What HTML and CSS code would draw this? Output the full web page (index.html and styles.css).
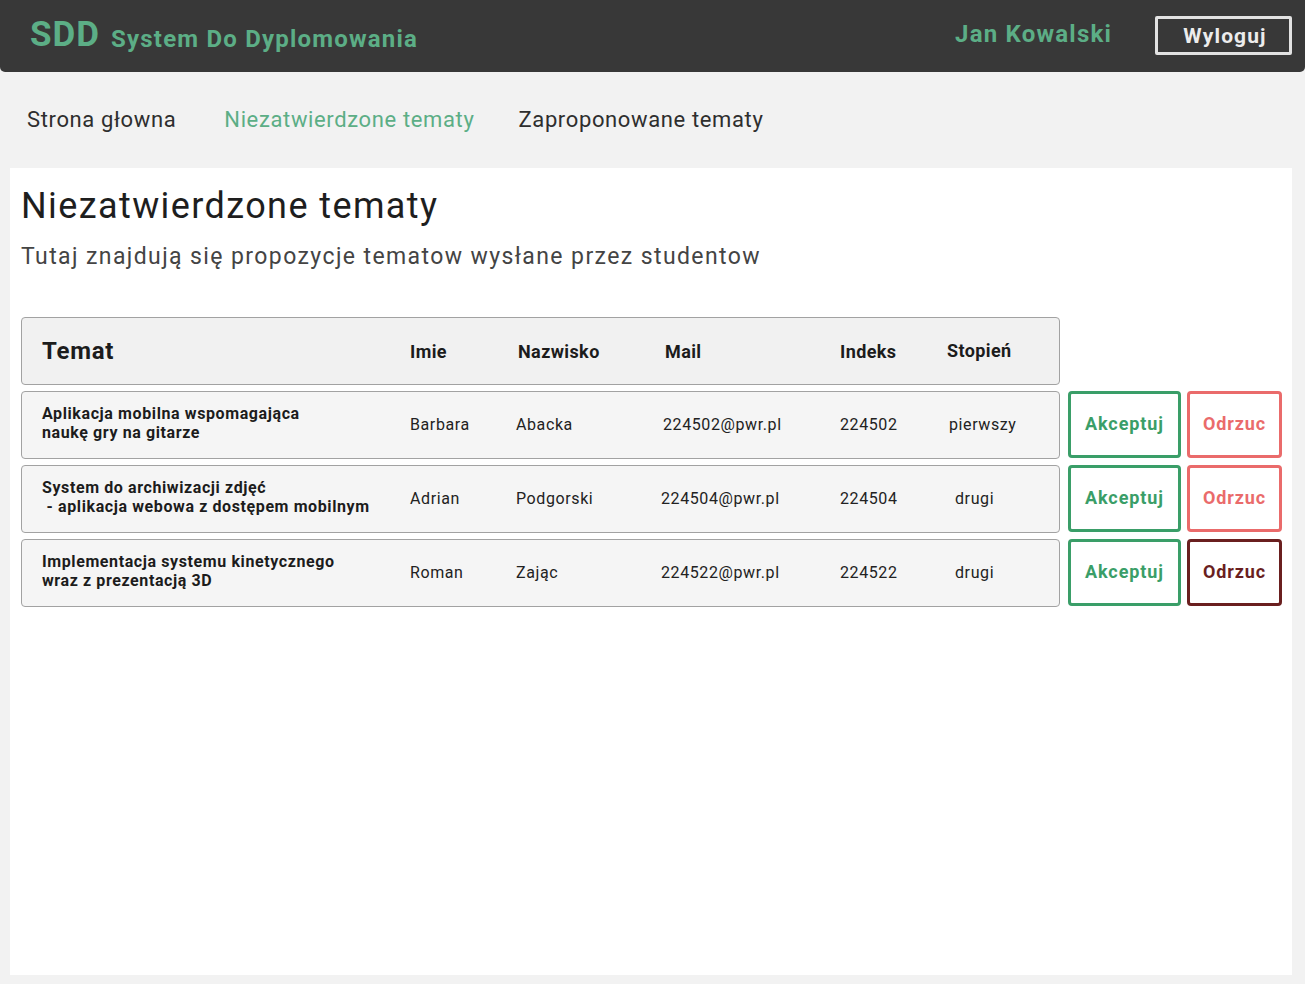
FILE: index.html
```html
<!DOCTYPE html>
<html lang="pl">
<head>
<meta charset="utf-8">
<title>SDD</title>
<link rel="stylesheet" href="styles.css">
</head>
<body>
<header class="topbar">
  <div class="brand"><span class="brand-short">SDD</span><span class="brand-long">System Do Dyplomowania</span></div>
  <div class="user">
    <span class="user-name">Jan Kowalski</span>
    <button class="logout">Wyloguj</button>
  </div>
</header>
<nav class="nav">
  <a class="nav-link first">Strona głowna</a>
  <a class="nav-link active">Niezatwierdzone tematy</a>
  <a class="nav-link">Zaproponowane tematy</a>
</nav>
<main class="panel">
  <h1 class="title">Niezatwierdzone tematy</h1>
  <p class="subtitle">Tutaj znajdują się propozycje tematow wysłane przez studentow</p>
  <div class="table">
    <div class="line">
      <div class="row head">
        <div class="c-temat">Temat</div>
        <div class="c-imie">Imie</div>
        <div class="c-nazw">Nazwisko</div>
        <div class="c-mail">Mail</div>
        <div class="c-idx">Indeks</div>
        <div class="c-st st-head">Stopień</div>
      </div>
    </div>
    <div class="line">
      <div class="row">
        <div class="c-temat topic">Aplikacja mobilna wspomagająca<br>naukę gry na gitarze</div>
        <div class="c-imie">Barbara</div>
        <div class="c-nazw">Abacka</div>
        <div class="c-mail">224502@pwr.pl</div>
        <div class="c-idx">224502</div>
        <div class="c-st">pierwszy</div>
      </div>
      <button class="btn accept">Akceptuj</button>
      <button class="btn reject">Odrzuc</button>
    </div>
    <div class="line">
      <div class="row">
        <div class="c-temat topic">System do archiwizacji zdjęć<br>&nbsp;- aplikacja webowa z dostępem mobilnym</div>
        <div class="c-imie">Adrian</div>
        <div class="c-nazw">Podgorski</div>
        <div class="c-mail mail-alt">224504@pwr.pl</div>
        <div class="c-idx">224504</div>
        <div class="c-st st-short">drugi</div>
      </div>
      <button class="btn accept">Akceptuj</button>
      <button class="btn reject">Odrzuc</button>
    </div>
    <div class="line">
      <div class="row">
        <div class="c-temat topic">Implementacja systemu kinetycznego<br>wraz z prezentacją 3D</div>
        <div class="c-imie">Roman</div>
        <div class="c-nazw">Zając</div>
        <div class="c-mail mail-alt">224522@pwr.pl</div>
        <div class="c-idx">224522</div>
        <div class="c-st st-short">drugi</div>
      </div>
      <button class="btn accept">Akceptuj</button>
      <button class="btn reject dark">Odrzuc</button>
    </div>
  </div>
</main>
</body>
</html>
```

FILE: styles.css
```css
* { box-sizing: border-box; }
html, body { margin: 0; padding: 0; }
body {
  background: #f2f2f2;
  font-family: Roboto, "Liberation Sans", sans-serif;
  color: #222;
  height: 984px;
  display: flex;
  flex-direction: column;
}
.topbar {
  height: 72px;
  background: #383838;
  border-radius: 0 0 5px 5px;
  display: flex;
  align-items: center;
  justify-content: space-between;
  padding: 0 13px 0 30px;
  flex: none;
}
.brand { color: #5cae86; font-weight: 700; display: flex; align-items: baseline; position: relative; top: -2px; }
.brand-short { font-size: 35px; letter-spacing: 1px; margin-right: 11px; }
.brand-long { font-size: 24px; letter-spacing: 1.2px; position: relative; top: 1px; }
.user { display: flex; align-items: center; }
.user-name { color: #5cae86; font-weight: 700; font-size: 24px; letter-spacing: 1.2px; margin-right: 43px; position: relative; top: -2px; }
.logout {
  width: 137px;
  height: 39px;
  margin-top: -1px;
  background: transparent;
  border: 3px solid #e2e2e2;
  border-radius: 2px;
  color: #ececec;
  font-family: inherit;
  font-weight: 700;
  font-size: 21px;
  letter-spacing: 1.1px;
  padding: 0 0 0 3px;
}
.nav {
  height: 96px;
  display: flex;
  align-items: center;
  padding-left: 27px;
  gap: 44px;
  flex: none;
}
.nav-link { font-size: 22px; color: #2e2e2e; letter-spacing: 0.63px; position: relative; top: -1px; }
.nav-link.first { margin-right: 4px; }
.nav-link.active { color: #5cae86; }
.panel {
  background: #fff;
  margin: 0 13px 9px 10px;
  flex: 1;
  padding: 16px 10px 0 11px;
}
.title {
  margin: 0;
  font-size: 36px;
  font-weight: 400;
  letter-spacing: 1.4px;
  color: #1e1e1e;
  line-height: 44px;
}
.subtitle {
  margin: 14px 0 0;
  font-size: 23px;
  color: #444;
  letter-spacing: 1.4px;
  line-height: 30px;
}
.table { margin-top: 45px; display: flex; flex-direction: column; gap: 6px; }
.line { display: flex; align-items: stretch; }
.row {
  flex: none;
  width: 1039px;
  height: 68px;
  border: 1px solid #a2a2a2;
  border-radius: 4px;
  background: #f5f5f5;
  display: grid;
  grid-template-columns: 368px 106px 147px 177px 107px 1fr;
  align-items: center;
  padding-left: 20px;
  padding-bottom: 1px;
  font-size: 16px;
  letter-spacing: 0.6px;
  color: #222;
}
.row.head { background: #f1f1f1; font-weight: 700; font-size: 18px; letter-spacing: 0.4px; color: #1c1c1c; padding-bottom: 0; }
.row.head .c-temat { font-size: 24px; letter-spacing: 0.7px; }
.row.head .c-nazw, .row.head .c-mail { padding-left: 2px; }
.st-head { position: relative; top: -1px; }
.topic { font-weight: 700; font-size: 16px; letter-spacing: 0.6px; line-height: 19px; color: #1c1c1c; position: relative; top: -2px; }
.c-st { padding-left: 2px; }
.row.head .c-st { padding-left: 0; }
.c-st.st-short { padding-left: 8px; }
.mail-alt { margin-left: -2px; }
.btn {
  width: 114px;
  height: 67px;
  margin-left: 8px;
  background: #fff;
  border: 3px solid #3a9e68;
  border-radius: 4px;
  font-family: inherit;
  font-weight: 700;
  font-size: 18px;
  letter-spacing: 0.9px;
  color: #3a9e68;
  padding: 0 0 2px;
}
.btn.reject { width: 96px; margin-left: 6px; border-color: #ea6b6b; color: #ea6b6b; }
.btn.reject.dark { border-color: #6a1f1f; color: #6a1f1f; }
```
